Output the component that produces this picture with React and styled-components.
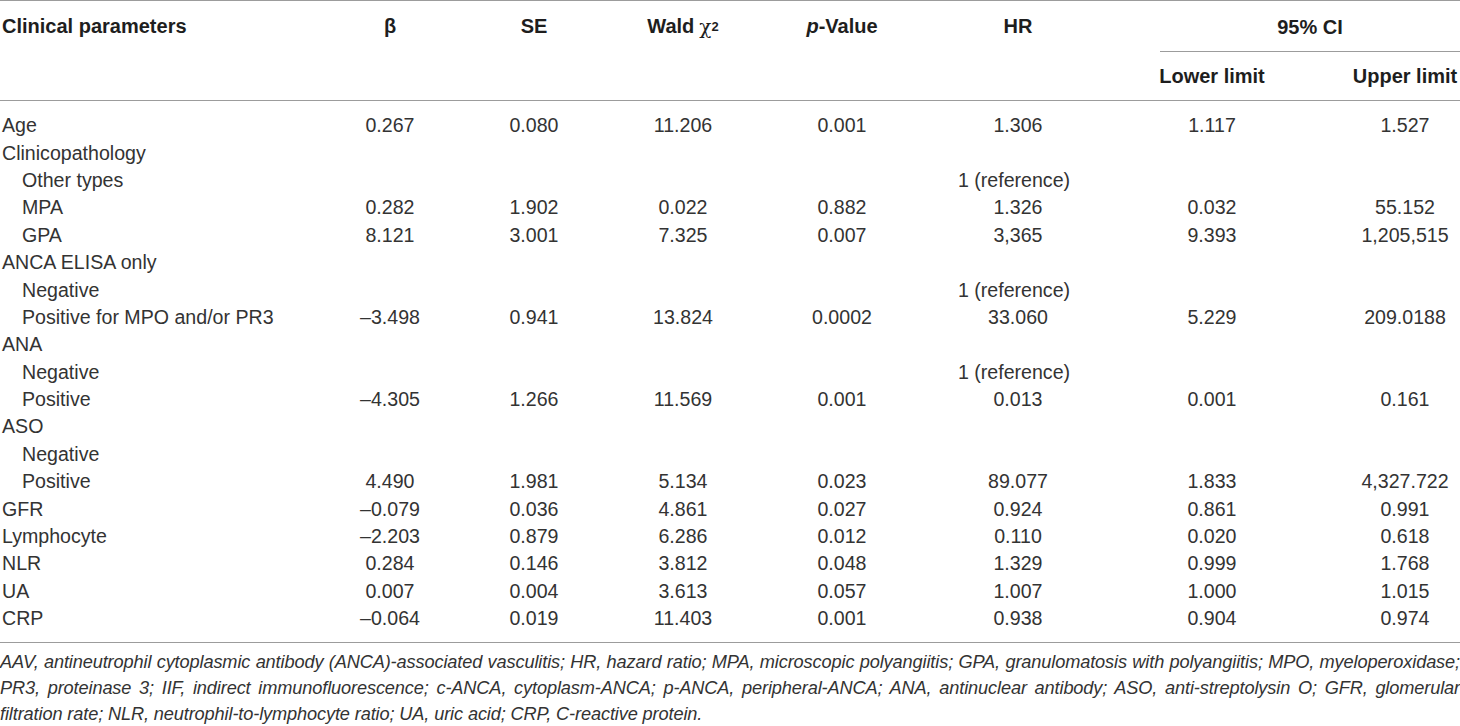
import React from "react";
import styled, { createGlobalStyle } from "styled-components";

const Global = createGlobalStyle`
  html, body { margin: 0; padding: 0; background: #fff; }
  body { font-family: "Liberation Sans", Arial, sans-serif; color: #333; }
`;

const COLS = "320px 140px 148px 150px 168px 184px 204px 146px";
const RULE = "1px solid #9c9c9c";

const Wrap = styled.div`
  width: 1460px;
  height: 726px;
  overflow: hidden;
`;

const Table = styled.div`
  border-top: ${RULE};
  border-bottom: ${RULE};
`;

const Head = styled.div`
  display: grid;
  grid-template-columns: ${COLS};
  grid-template-rows: 51px 48px;
  border-bottom: ${RULE};
  font-weight: 700;
  font-size: 20px;
  color: #1e1e1e;
`;

const HeadCell = styled.div`
  grid-row: ${(p) => p.$row || 1};
  grid-column: ${(p) => p.$col};
  display: flex;
  align-items: center;
  justify-content: ${(p) => (p.$left ? "flex-start" : "center")};
  padding-left: ${(p) => p.$pl || 0}px;
  white-space: nowrap;
`;

const SpanHead = styled(HeadCell)`
  margin-left: 50px;
  border-bottom: ${RULE};
  padding-top: 2px;
`;

const Body = styled.div`
  padding: 11px 0 10px;
  font-size: 19.6px;
`;

const Row = styled.div`
  display: grid;
  grid-template-columns: ${COLS};
  height: 27.4px;
  align-items: center;
  white-space: nowrap;
`;

const Label = styled.div`
  padding-left: ${(p) => (p.$indent ? 22 : 2)}px;
`;

const Num = styled.div`
  text-align: center;
  padding-left: ${(p) => p.$pl || 0}px;
`;

const Ref = styled.div`
  grid-column: 6;
  text-align: center;
  padding-right: 8px;
`;

const Sup = styled.sup`
  font-size: 13px;
  vertical-align: 8px;
  line-height: 0;
`;

const Chi = styled.span`
  font-family: "DejaVu Serif", "Liberation Serif", serif;
  font-weight: 400;
  font-size: 20px;
  margin-left: 5px;
`;

const Foot = styled.div`
  padding-top: 6px;
  font-style: italic;
  font-size: 18.2px;
  letter-spacing: -0.13px;
  line-height: 26px;
  color: #333;
`;

const FootLine = styled.div`
  white-space: nowrap;
  text-align: ${(p) => (p.$last ? "left" : "justify")};
  text-align-last: ${(p) => (p.$last ? "left" : "justify")};
`;

const rows = [
  { label: "Age", v: ["0.267", "0.080", "11.206", "0.001", "1.306", "1.117", "1.527"] },
  { label: "Clinicopathology" },
  { label: "Other types", indent: true, ref: true },
  { label: "MPA", indent: true, v: ["0.282", "1.902", "0.022", "0.882", "1.326", "0.032", "55.152"] },
  { label: "GPA", indent: true, v: ["8.121", "3.001", "7.325", "0.007", "3,365", "9.393", "1,205,515"] },
  { label: "ANCA ELISA only" },
  { label: "Negative", indent: true, ref: true },
  { label: "Positive for MPO and/or PR3", indent: true, v: ["–3.498", "0.941", "13.824", "0.0002", "33.060", "5.229", "209.0188"] },
  { label: "ANA" },
  { label: "Negative", indent: true, ref: true },
  { label: "Positive", indent: true, v: ["–4.305", "1.266", "11.569", "0.001", "0.013", "0.001", "0.161"] },
  { label: "ASO" },
  { label: "Negative", indent: true },
  { label: "Positive", indent: true, v: ["4.490", "1.981", "5.134", "0.023", "89.077", "1.833", "4,327.722"] },
  { label: "GFR", v: ["–0.079", "0.036", "4.861", "0.027", "0.924", "0.861", "0.991"] },
  { label: "Lymphocyte", v: ["–2.203", "0.879", "6.286", "0.012", "0.110", "0.020", "0.618"] },
  { label: "NLR", v: ["0.284", "0.146", "3.812", "0.048", "1.329", "0.999", "1.768"] },
  { label: "UA", v: ["0.007", "0.004", "3.613", "0.057", "1.007", "1.000", "1.015"] },
  { label: "CRP", v: ["–0.064", "0.019", "11.403", "0.001", "0.938", "0.904", "0.974"] },
];

const footLines = [
  "AAV, antineutrophil cytoplasmic antibody (ANCA)-associated vasculitis; HR, hazard ratio; MPA, microscopic polyangiitis; GPA, granulomatosis with polyangiitis; MPO, myeloperoxidase;",
  "PR3, proteinase 3; IIF, indirect immunofluorescence; c-ANCA, cytoplasm-ANCA; p-ANCA, peripheral-ANCA; ANA, antinuclear antibody; ASO, anti-streptolysin O; GFR, glomerular",
  "filtration rate; NLR, neutrophil-to-lymphocyte ratio; UA, uric acid; CRP, C-reactive protein.",
];

export default function App() {
  return (
    <Wrap>
      <Global />
      <Table>
        <Head>
          <HeadCell $col={1} $left $pl={2}>Clinical parameters</HeadCell>
          <HeadCell $col={2}>β</HeadCell>
          <HeadCell $col={3}>SE</HeadCell>
          <HeadCell $col={4}>
            Wald<Chi>χ</Chi>
            <Sup>2</Sup>
          </HeadCell>
          <HeadCell $col={5}>
            <i>p</i>-Value
          </HeadCell>
          <HeadCell $col={6}>HR</HeadCell>
          <SpanHead $col="7 / span 2">95% CI</SpanHead>
          <HeadCell $row={2} $col={7}>Lower limit</HeadCell>
          <HeadCell $row={2} $col={8} $pl={36}>Upper limit</HeadCell>
        </Head>
        <Body>
          {rows.map((r, i) => (
            <Row key={i}>
              <Label $indent={r.indent}>{r.label}</Label>
              {r.ref && <Ref>1 (reference)</Ref>}
              {r.v &&
                r.v.map((x, j) => (
                  <Num key={j} $pl={j === 6 ? 36 : 0}>
                    {x}
                  </Num>
                ))}
            </Row>
          ))}
        </Body>
      </Table>
      <Foot>
        {footLines.map((l, i) => (
          <FootLine key={i} $last={i === footLines.length - 1}>
            {l}
          </FootLine>
        ))}
      </Foot>
    </Wrap>
  );
}
